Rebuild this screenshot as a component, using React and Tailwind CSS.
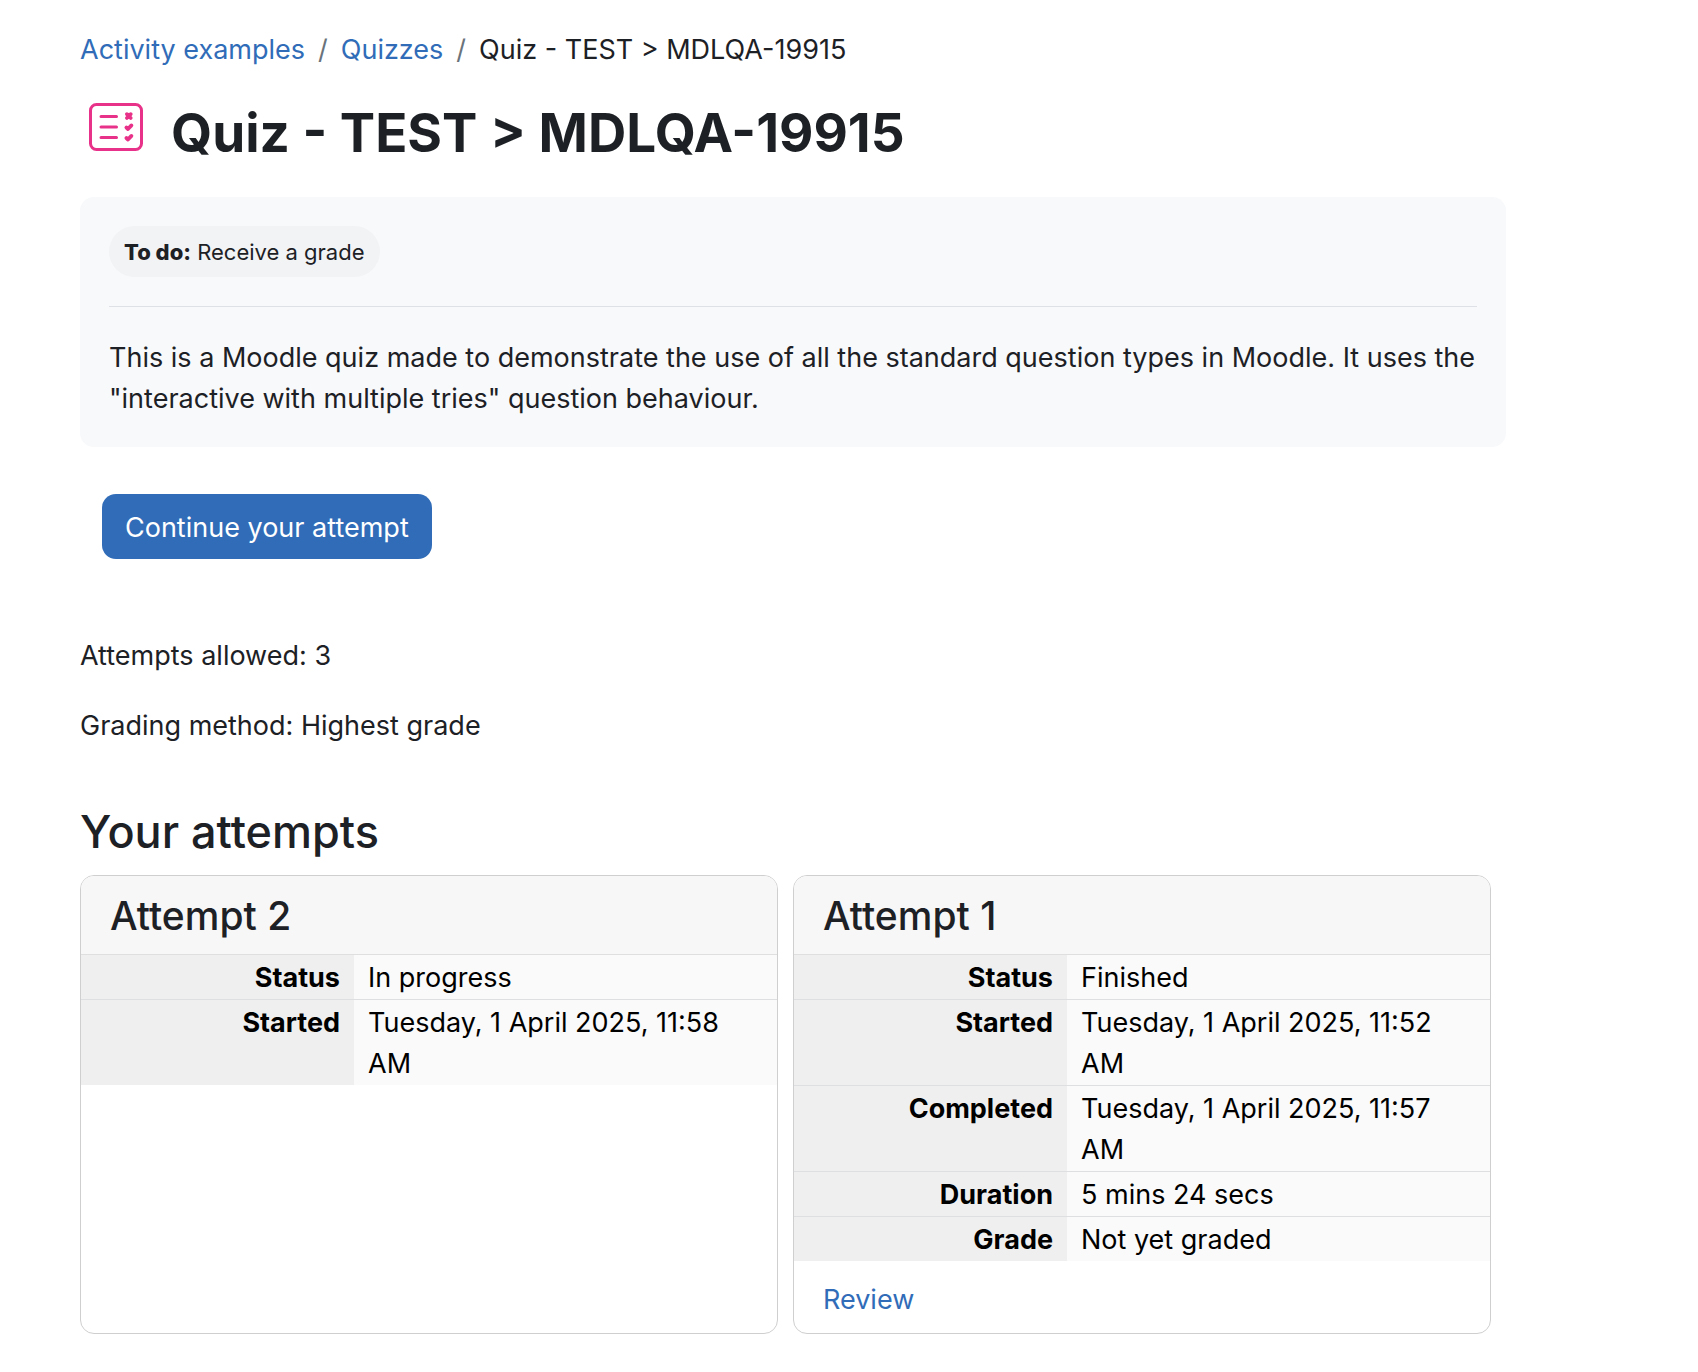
import React from 'react';

const attempts = [
  {
    title: 'Attempt 2',
    rows: [
      ['Status', 'In progress'],
      ['Started', 'Tuesday, 1 April 2025, 11:58 AM'],
    ],
  },
  {
    title: 'Attempt 1',
    rows: [
      ['Status', 'Finished'],
      ['Started', 'Tuesday, 1 April 2025, 11:52 AM'],
      ['Completed', 'Tuesday, 1 April 2025, 11:57 AM'],
      ['Duration', '5 mins 24 secs'],
      ['Grade', 'Not yet graded'],
    ],
    review: true,
  },
];

const QuizIcon = () => (
  <svg width="54" height="48" viewBox="0 0 54 48" fill="none" stroke="#e83289" strokeLinecap="round" aria-hidden="true">
    <rect x="1.5" y="1.5" width="51" height="45" rx="6" strokeWidth="3" />
    <path d="M12 13.5h15.5M12 24h15.5M12 34.5h15.5" strokeWidth="3" />
    <path d="M37.9 11.2l3.8 3.8M41.7 11.2l-3.8 3.8" strokeWidth="3.8" />
    <path d="M37.4 24.5l1.6 1.5 3.4-3.6M37.4 35l1.6 1.5 3.4-3.6" strokeWidth="3.8" strokeLinejoin="round" />
  </svg>
);

const AttemptCard = ({ title, rows, review }) => (
  <section className="flex-1 min-w-0 rounded-[14px] border border-[#cfcfcf] overflow-hidden">
    <h3 className="bg-[#f7f7f7] border-b border-[#dfdfdf] px-[29px] pt-4 pb-[14px] text-[39px] leading-[48px] font-medium">
      {title}
    </h3>
    <table className="w-full table-fixed border-collapse text-black">
      <tbody>
        {rows.map(([label, value]) => (
          <tr key={label} className="border-b border-[#dedfe1] last:border-b-0 align-top">
            <th scope="row" className="w-[273px] bg-[#efefef] px-[14px] pt-[2px] pb-px text-right font-bold">
              {label}
            </th>
            <td className="bg-[#fafafa] px-[14px] pt-[2px] pb-px">{value}</td>
          </tr>
        ))}
      </tbody>
    </table>
    {review && (
      <div className="px-[29px] pt-[18px] pb-[13px]">
        <a href="#review" className="text-[#306cb8]">Review</a>
      </div>
    )}
  </section>
);

const App = () => {
  return (
    <main className="bg-white pl-20 pr-48 pt-[29px] pb-9 font-['Inter','Liberation_Sans',sans-serif] text-[27px] leading-[41px] text-[#1d2125]">
      {/* BREADCRUMB */}
      <nav aria-label="Breadcrumb">
        <ol className="flex gap-[13px]">
          <li><a href="#examples" className="text-[#306cb8]">Activity examples</a></li>
          <li className="text-[#6a737b]" aria-hidden="true">/</li>
          <li><a href="#quizzes" className="text-[#306cb8]">Quizzes</a></li>
          <li className="text-[#6a737b]" aria-hidden="true">/</li>
          <li>Quiz - TEST &gt; MDLQA-19915</li>
        </ol>
      </nav>

      {/* TITLE */}
      <header className="mt-[33px] flex items-start pl-[9px] gap-7">
        <QuizIcon />
        <h1 className="text-[53px] leading-[60px] font-bold">Quiz - TEST &gt; MDLQA-19915</h1>
      </header>

      {/* ACTIVITY INFO */}
      <section className="mt-[34px] rounded-[14px] bg-[#f8f9fb] px-[29px] pt-[29px] pb-7">
        <div className="flex">
          <span className="rounded-full bg-[#f2f3f5] px-[15px] pt-[10px] pb-2 text-[22px] leading-[33px]">
            <strong className="font-extrabold">To do:</strong> Receive a grade
          </span>
        </div>
        <hr className="mt-[29px] mb-[30px] border-[#dee2e6]" />
        <p>
          This is a Moodle quiz made to demonstrate the use of all the standard question types in
          Moodle. It uses the "interactive with multiple tries" question behaviour.
        </p>
      </section>

      <div className="mt-[47px] pl-[22px]">
        <button type="button" className="rounded-[14px] bg-[#306cb8] px-[23px] pt-[13px] pb-[11px] text-white">
          Continue your attempt
        </button>
      </div>

      <div className="mt-[76px] flex flex-col gap-[29px]">
        <p>Attempts allowed: 3</p>
        <p>Grading method: Highest grade</p>
      </div>

      {/* ATTEMPTS */}
      <h2 className="mt-[58px] mb-[15px] text-[45px] leading-[56px] font-medium">Your attempts</h2>
      <div className="flex gap-[15px] pr-[15px]">
        {attempts.map((attempt) => (
          <AttemptCard key={attempt.title} {...attempt} />
        ))}
      </div>
    </main>
  );
};

export default App;
